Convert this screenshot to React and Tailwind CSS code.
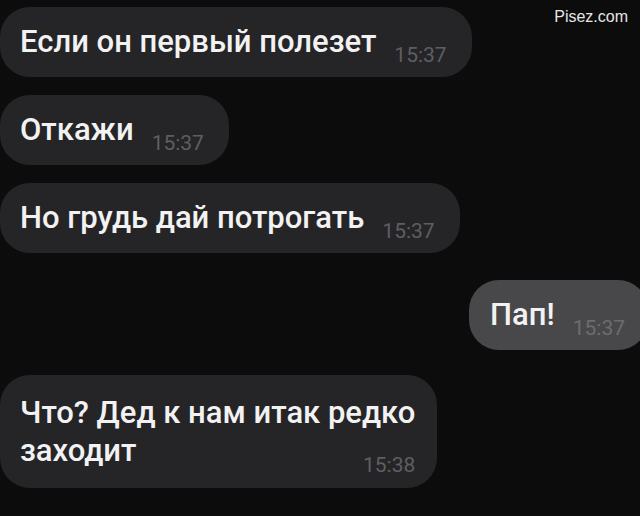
export default function App() {
  const font = { fontFamily: "Roboto, 'Noto Sans', sans-serif" };
  const Single = ({ text, time }) => (
    <div className="flex items-end self-start bg-[#252528] rounded-[30px] pl-[20px] pr-[25px] pt-[16px] pb-[11px]">
      <span className="text-[31px] leading-[38px] mb-[5px] text-[#f2f2f2] font-medium whitespace-nowrap">{text}</span>
      <span className="ml-[18px] text-[21px] leading-[21px] text-[#5e5e62] whitespace-nowrap">{time}</span>
    </div>
  );
  return (
    <div className="w-[640px] h-[516px] bg-[#0c0c0c] overflow-hidden relative" style={font}>
      <div className="absolute right-[12px] top-[5px] text-[16px] text-[#e6e6e6]" style={{ fontFamily: "'Liberation Sans', Arial, sans-serif" }}>
        Pisez.com
      </div>
      <div className="flex flex-col pt-[7px]">
        <Single text="Если он первый полезет" time="15:37" />
        <div className="h-[18px]" />
        <Single text="Откажи" time="15:37" />
        <div className="h-[18px]" />
        <Single text="Но грудь дай потрогать" time="15:37" />
        <div className="h-[27px]" />
        <div className="flex items-end self-end mr-[-8px] bg-[#48484b] rounded-[30px] pl-[21px] pr-[23px] pt-[16px] pb-[11px]">
          <span className="text-[31px] leading-[38px] mb-[5px] text-[#f2f2f2] font-medium whitespace-nowrap">Пап!</span>
          <span className="ml-[18px] text-[21px] leading-[21px] text-[#6c6c70] whitespace-nowrap">15:37</span>
        </div>
        <div className="h-[25px]" />
        <div className="flex flex-col self-start bg-[#252528] rounded-[30px] pl-[20px] pr-[22px] pt-[19px] pb-[12px]">
          <span className="text-[31px] leading-[38px] text-[#f2f2f2] font-medium whitespace-nowrap">
            Что? Дед к нам итак редко
            <br />
            заходит
          </span>
          <span className="self-end mt-[-15px] text-[21px] leading-[21px] text-[#5e5e62] whitespace-nowrap">15:38</span>
        </div>
      </div>
    </div>
  );
}
